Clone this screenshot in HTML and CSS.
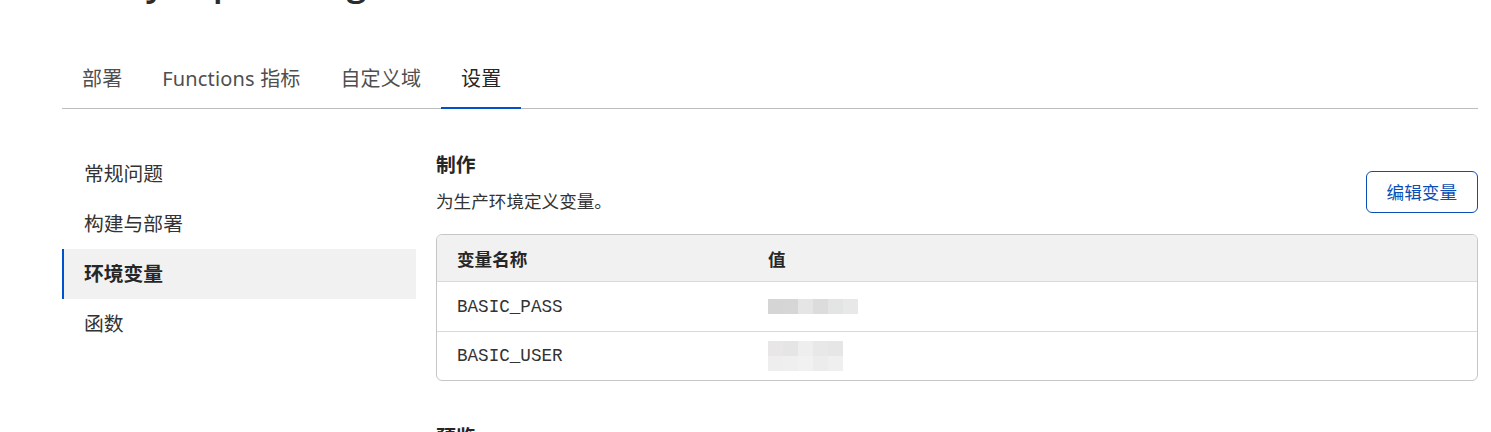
FILE: index.html
```html
<!DOCTYPE html>
<html lang="zh-CN">
<head>
<meta charset="utf-8">
<title>设置 - 环境变量</title>
<link rel="stylesheet" href="styles.css">
</head>
<body>
<div class="page">
  <h1 class="project-title">heavy-top-settings</h1>

  <nav class="tabs">
    <a class="tab">部署</a>
    <a class="tab">Functions 指标</a>
    <a class="tab">自定义域</a>
    <a class="tab tab-active">设置</a>
  </nav>

  <div class="main">
    <aside class="sidebar">
      <a class="side-item">常规问题</a>
      <a class="side-item">构建与部署</a>
      <a class="side-item side-active">环境变量</a>
      <a class="side-item">函数</a>
    </aside>

    <section class="content">
      <div class="section">
        <div class="section-head">
          <div class="section-text">
            <h2 class="section-title">制作</h2>
            <p class="section-desc">为生产环境定义变量。</p>
          </div>
          <button class="btn-outline">编辑变量</button>
        </div>

        <div class="table">
          <div class="row row-head">
            <div class="cell cell-name">变量名称</div>
            <div class="cell cell-value">值</div>
          </div>
          <div class="row">
            <div class="cell cell-name mono">BASIC_PASS</div>
            <div class="cell cell-value">
              <div class="blur">
                <div class="blur-line">
                  <span class="px" style="background:#d5d5d5"></span><span class="px" style="background:#d6d6d6"></span><span class="px" style="background:#e5e5e5"></span><span class="px" style="background:#dcdcdc"></span><span class="px" style="background:#e3e5e5"></span><span class="px" style="background:#e8e8e8"></span>
                </div>
              </div>
            </div>
          </div>
          <div class="row row-last">
            <div class="cell cell-name mono">BASIC_USER</div>
            <div class="cell cell-value">
              <div class="blur">
                <div class="blur-line">
                  <span class="px" style="background:#e8e6e6"></span><span class="px" style="background:#e5e5e5"></span><span class="px" style="background:#eeeeee"></span><span class="px" style="background:#e8e8e8"></span><span class="px" style="background:#e6e6e6"></span>
                </div>
                <div class="blur-line">
                  <span class="px" style="background:#eeeeee"></span><span class="px" style="background:#efefef"></span><span class="px" style="background:#f1f1f1"></span><span class="px" style="background:#ececec"></span><span class="px" style="background:#efefef"></span>
                </div>
              </div>
            </div>
          </div>
        </div>
      </div>

      <div class="section section-next">
        <h2 class="section-title">预览</h2>
      </div>
    </section>
  </div>
</div>
</body>
</html>
```

FILE: styles.css
```css
html, body {
  margin: 0;
  padding: 0;
  background: #ffffff;
  overflow: hidden;
}

body {
  font-family: "Noto Sans", "Noto Sans CJK SC", sans-serif;
  color: #323232;
}

.page {
  width: 1416px;
  margin-left: 62px;
}

.project-title {
  margin: -42px 0 0 0;
  font-family: "Open Sans", "Noto Sans CJK SC", sans-serif;
  font-size: 36px;
  font-weight: 600;
  line-height: 48px;
  color: #2b2b2b;
  white-space: nowrap;
}

/* Tabs */
.tabs {
  display: flex;
  margin-top: 44px;
  border-bottom: 1px solid #bdbdbd;
}

.tab {
  position: relative;
  padding: 15px 20px;
  font-size: 20px;
  letter-spacing: 0.15px;
  line-height: 28px;
  color: #4f4f4f;
  white-space: nowrap;
}

.tab-active {
  color: #262626;
}

.tab-active::after {
  content: "";
  position: absolute;
  left: 0;
  right: 0;
  bottom: -1px;
  height: 2px;
  background: #0052cc;
}

/* Main */
.main {
  display: flex;
  gap: 20px;
  margin-top: 40px;
}

.sidebar {
  width: 354px;
  flex: none;
  display: flex;
  flex-direction: column;
}

.side-item {
  height: 50px;
  box-sizing: border-box;
  display: flex;
  align-items: center;
  padding-left: 20px;
  padding-bottom: 3px;
  border-left: 2px solid transparent;
  font-size: 19.8px;
  color: #333333;
}

.side-active {
  background: #f1f1f1;
  border-left-color: #0052cc;
  font-weight: 700;
  color: #262626;
}

.content {
  flex: 1;
  min-width: 0;
}

.section-head {
  display: flex;
  justify-content: space-between;
  align-items: flex-end;
}

.section-title {
  margin: 0;
  font-size: 19.8px;
  line-height: 32px;
  font-weight: 700;
  color: #262626;
}

.section-desc {
  margin: 7px 0 0 0;
  font-size: 17.6px;
  line-height: 26px;
  color: #333333;
}

.btn-outline {
  margin-bottom: 1px;
  padding: 7px 20px;
  font-family: "Noto Sans", "Noto Sans CJK SC", sans-serif;
  font-size: 17.6px;
  line-height: 26px;
  color: #0b4fb5;
  background: #ffffff;
  border: 1px solid #0b4fb5;
  border-radius: 6px;
  cursor: pointer;
}

/* Table */
.table {
  margin-top: 20px;
  border: 1px solid #c6c6c6;
  border-radius: 6px;
  overflow: hidden;
}

.row {
  display: flex;
  height: 49px;
  border-bottom: 1px solid #d9d9d9;
}

.row-head {
  height: 46px;
  background: #f1f1f1;
}

.row-last {
  height: 48px;
  border-bottom: none;
}

.cell {
  display: flex;
  align-items: center;
  padding-left: 20px;
  font-size: 17.6px;
  color: #333333;
}

.row-head .cell {
  font-weight: 700;
  color: #262626;
}

.cell-name {
  width: 311px;
  box-sizing: border-box;
  flex: none;
}

.cell-value {
  flex: 1;
}

.mono {
  font-family: "Liberation Mono", "Courier New", monospace;
  font-size: 17.6px;
  color: #333333;
}

.blur {
  display: flex;
  flex-direction: column;
}

.blur-line {
  display: flex;
}

.px {
  display: block;
  width: 15px;
  height: 15px;
}

.section-next {
  margin-top: 40px;
}
```
